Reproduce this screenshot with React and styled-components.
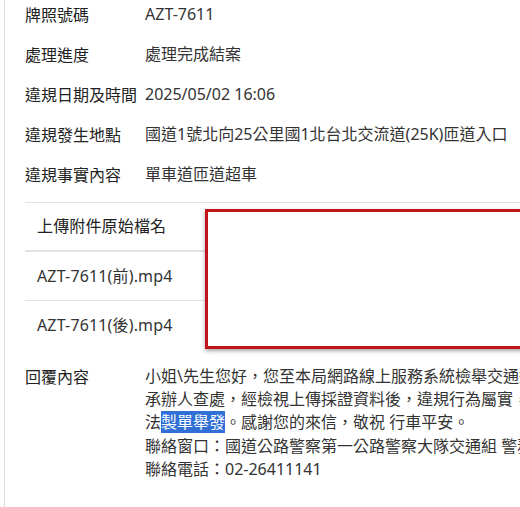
import React from "react";
import styled, { createGlobalStyle } from "styled-components";

const Global = createGlobalStyle`
  html, body { margin: 0; padding: 0; overflow: hidden; background: #fff; }
  body { font-family: "Noto Sans", "Noto Sans CJK TC", sans-serif; color: #333; }
`;

const Page = styled.div`
  width: 900px;
  margin-top: -6px;
  padding-left: 4px;
`;

const Card = styled.div`
  border-left: 1px solid #dedede;
  padding: 0 0 40px 20px;
  min-height: 560px;
`;

const Row = styled.div`
  display: grid;
  grid-template-columns: 120px 1fr;
  padding: ${(p) => (p.$reply ? "15px 0 8px" : "8px 0")};
  font-size: 16px;
  line-height: ${(p) => (p.$reply ? "23.2px" : "24px")};
  white-space: nowrap;
`;

const Label = styled.div`
  color: #222;
  font-family: "Noto Sans CJK TC", sans-serif;
`;

const Value = styled.div`
  color: #333;
`;

const TableWrap = styled.div`
  position: relative;
  margin-top: 8px;
`;

const Table = styled.div`
  border-top: 1px solid #e2e2e2;
`;

const Cell = styled.div`
  height: 49px;
  box-sizing: border-box;
  display: flex;
  align-items: center;
  padding: 0 0 3px 12px;
  font-size: 16px;
  letter-spacing: 0.15px;
  color: ${(p) => (p.$head ? "#222" : "#333")};
  border-bottom: ${(p) => (p.$last ? "none" : p.$head ? "2px solid #e2e2e2" : "1px solid #e2e2e2")};
`;

const Redact = styled.div`
  position: absolute;
  left: 180px;
  top: 7px;
  width: 420px;
  height: 134px;
  border: 3px solid #c3141c;
  background: #fff;
  box-shadow: 0 2px 4px rgba(0, 0, 0, 0.35);
`;

const Mark = styled.span`
  background: #2f6fd6;
  color: #fff;
`;

export default function App() {
  return (
    <>
      <Global />
      <Page>
        <Card>
          <Row><Label>牌照號碼</Label><Value>AZT-7611</Value></Row>
          <Row><Label>處理進度</Label><Value>處理完成結案</Value></Row>
          <Row><Label>違規日期及時間</Label><Value>2025/05/02 16:06</Value></Row>
          <Row><Label>違規發生地點</Label><Value>國道1號北向25公里國1北台北交流道(25K)匝道入口</Value></Row>
          <Row><Label>違規事實內容</Label><Value>單車道匝道超車</Value></Row>
          <TableWrap>
            <Table>
              <Cell $head>上傳附件原始檔名</Cell>
              <Cell>AZT-7611(前).mp4</Cell>
              <Cell $last>AZT-7611(後).mp4</Cell>
            </Table>
            <Redact />
          </TableWrap>
          <Row $reply>
            <Label>回覆內容</Label>
            <Value>
              小姐\先生您好，您至本局網路線上服務系統檢舉交通違規案件，經
              <br />
              承辦人查處，經檢視上傳採證資料後，違規行為屬實，依
              <br />
              法<Mark>製單舉發</Mark>。感謝您的來信，敬祝 行車平安。
              <br />
              聯絡窗口：國道公路警察第一公路警察大隊交通組 警務員
              <br />
              聯絡電話：02-26411141
            </Value>
          </Row>
        </Card>
      </Page>
    </>
  );
}
